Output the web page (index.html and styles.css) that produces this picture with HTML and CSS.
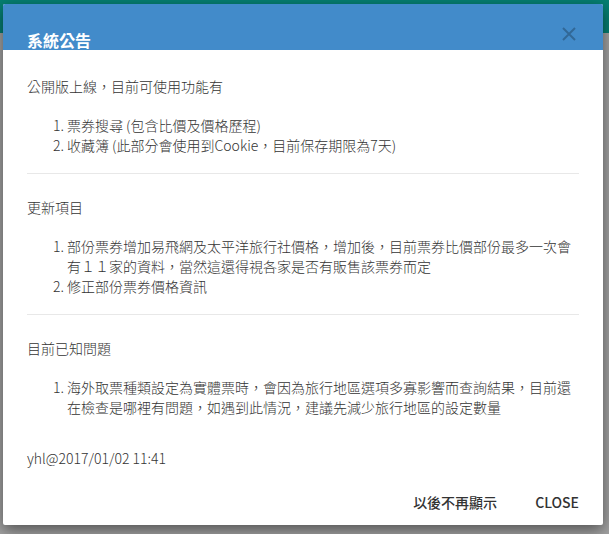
FILE: index.html
```html
<!DOCTYPE html>
<html lang="zh-Hant">
  <head>
    <meta charset="UTF-8" />
    <meta name="viewport" content="width=device-width, initial-scale=1.0" />
    <title>系統公告</title>
    <link rel="stylesheet" href="styles.css">
  </head>
  <body>
    <div class="page">
      <div class="topbar"></div>
    </div>

    <div class="modal">
      <div class="modal-header">
        <h4 class="modal-title">系統公告</h4>
        <button class="close" aria-label="Close">
          <svg width="14" height="14" viewBox="0 0 14 14">
            <path d="M1 1 L13 13 M13 1 L1 13" stroke="currentColor" stroke-width="2" fill="none" />
          </svg>
        </button>
      </div>
      <div class="modal-body">
        <div class="section">
          <p>公開版上線，目前可使用功能有</p>
          <ol>
            <li>票券搜尋 (包含比價及價格歷程)</li>
            <li>收藏簿 (此部分會使用到Cookie，目前保存期限為7天)</li>
          </ol>
        </div>
        <hr />
        <div class="section">
          <p>更新項目</p>
          <ol>
            <li>部份票券增加易飛網及太平洋旅行社價格，增加後，目前票券比價部份最多一次會有１１家的資料，當然這還得視各家是否有販售該票券而定</li>
            <li>修正部份票券價格資訊</li>
          </ol>
        </div>
        <hr />
        <div class="section">
          <p>目前已知問題</p>
          <ol>
            <li>海外取票種類設定為實體票時，會因為旅行地區選項多寡影響而查詢結果，目前還在檢查是哪裡有問題，如遇到此情況，建議先減少旅行地區的設定數量</li>
          </ol>
        </div>
        <p class="signature">yhl@2017/01/02 11:41</p>
      </div>
      <div class="modal-footer">
        <button class="btn">以後不再顯示</button>
        <button class="btn">CLOSE</button>
      </div>
    </div>
  </body>
</html>
```

FILE: styles.css
```css
html, body {
  margin: 0;
  height: 100%;
}
body {
  font-family: 'Noto Sans CJK TC', 'Noto Sans', sans-serif;
  background: #a3a3a3;
  overflow: hidden;
}
.topbar {
  height: 33px;
  background-color: #067f72;
}
.modal {
  position: absolute;
  left: 3px;
  top: 4px;
  width: 600px;
  background-color: #fff;
  border-radius: 2px;
  box-shadow: 0 5px 15px rgba(0, 0, 0, 0.5);
  color: #333;
}
.modal-header {
  display: flex;
  align-items: center;
  justify-content: space-between;
  height: 46px;
  box-sizing: border-box;
  padding: 26px 27px 0 24px;
  background-color: #428bca;
  border-radius: 2px 2px 0 0;
}
.modal-title {
  margin: 0;
  font-size: 16px;
  line-height: 20px;
  font-weight: bold;
  color: #fff;
}
.close {
  display: flex;
  padding: 0;
  margin-top: -12px;
  border: 0;
  background: none;
  color: rgba(0, 0, 0, 0.25);
  cursor: pointer;
}
.modal-body {
  padding: 26px 24px 0;
  font-size: 14px;
  line-height: 20px;
  font-weight: 300;
}
.modal-body p {
  margin: 0;
}
.section + hr + .section {
  padding-top: 23px;
}
.modal-body ol {
  margin: 19px 0 18px;
  padding-left: 40px;
}
hr {
  margin: 0;
  border: 0;
  border-top: 1px solid #e8e8e8;
}
.modal-body .signature {
  margin-top: 31px;
}
.modal-footer {
  display: flex;
  justify-content: flex-end;
  gap: 14px;
  padding: 16px 12px 5px;
}
.btn {
  height: 36px;
  padding: 0 12px;
  border: 0;
  background: none;
  font-family: inherit;
  font-size: 14px;
  font-weight: 500;
  color: #333;
  cursor: pointer;
}
```
